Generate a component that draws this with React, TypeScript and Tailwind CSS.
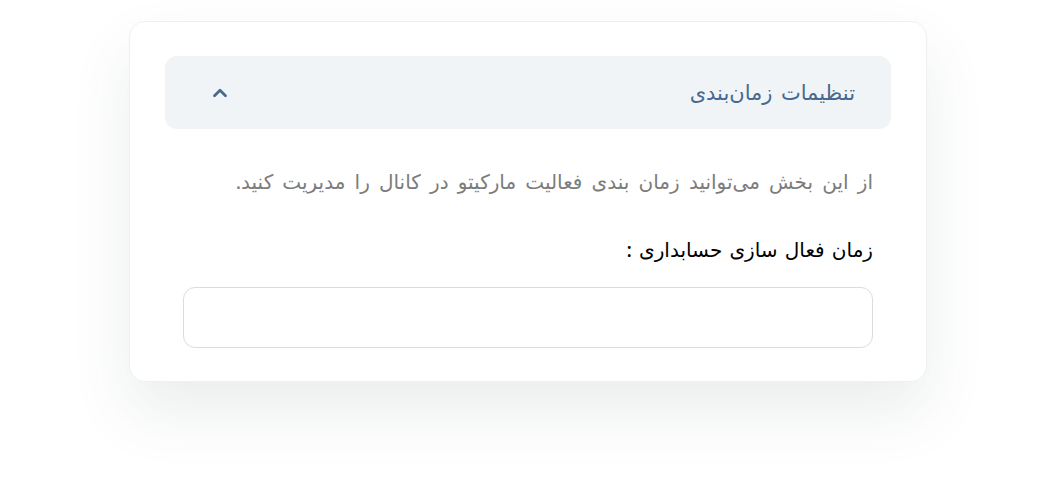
import React, { useState } from 'react';

export default function App() {
  const [open, setOpen] = useState(true);

  return (
    <div
      dir="rtl"
      className="w-[1056px] h-[484px] bg-white flex justify-center pt-[21px]"
      style={{ fontFamily: '"Noto Sans", "DejaVu Sans", sans-serif' }}
    >
      <div className="w-[798px] h-[361px] bg-white rounded-2xl border border-[#eef1f1] shadow-[0_30px_60px_rgba(60,80,80,0.10)] px-[35px] pt-[34px]">
        <button
          onClick={() => setOpen(!open)}
          className="w-full h-[73px] rounded-xl bg-[#f1f4f6] flex items-center justify-between pr-[36px] pl-[44px]"
        >
          <span className="text-[21px] text-[#47698f] [word-spacing:3px]">تنظیمات زمان‌بندی</span>
          <svg width="22" height="22" viewBox="0 0 24 24" fill="none" stroke="#47698f" strokeWidth="3" strokeLinecap="round" strokeLinejoin="round">
            <path d="M6 15l6-6 6 6" />
          </svg>
        </button>

        {open && (
          <div className="px-[18px]">
            <p className="mt-[39px] text-[20px] leading-[28px] text-[#7c7c7c] [word-spacing:4px]">
              از این بخش می‌توانید زمان بندی فعالیت مارکیتو در کانال را مدیریت کنید.
            </p>
            <label className="block mt-[40px] text-[20px] leading-[28px] font-medium text-black [word-spacing:2px]">زمان فعال سازی حسابداری :</label>
            <input className="mt-[23px] w-full h-[61px] rounded-xl border border-[#dcdcdc] outline-none px-4" />
          </div>
        )}
      </div>
    </div>
  );
}
